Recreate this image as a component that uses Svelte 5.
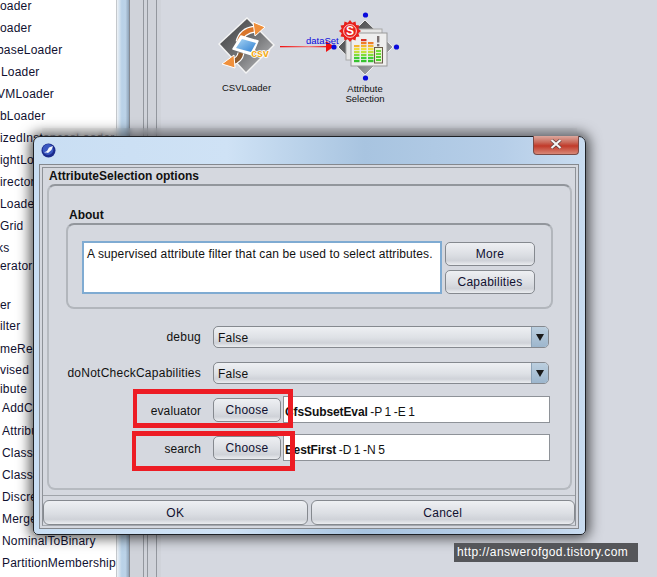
<script>
  const items = [
    { t: 'oader', x: 0, y: 6 }, { t: 'oader', x: 0, y: 28 }, { t: 'baseLoader', x: -3, y: 50 },
    { t: 'Loader', x: 1, y: 72 }, { t: 'VMLoader', x: -3, y: 94 }, { t: 'bLoader', x: 0, y: 116 },
    { t: 'izedInstancesLoader', x: 0, y: 138 }, { t: 'ightLoader', x: 0, y: 160 }, { t: 'irectoryLoader', x: 0, y: 182 },
    { t: 'Loader', x: 0, y: 204 }, { t: 'Grid', x: 0, y: 226 }, { t: 'ks', x: -3, y: 248 },
    { t: 'erator', x: 0, y: 266 }, { t: 'er', x: 0, y: 305 }, { t: 'ilter', x: 0, y: 326 },
    { t: 'meRemoval', x: 0, y: 349 }, { t: 'vised', x: 0, y: 370 }, { t: 'ibute', x: 0, y: 389 },
    { t: 'AddCluster', x: 2, y: 408 }, { t: 'AttributeSelection', x: 2, y: 431 }, { t: 'ClassAssigner', x: 2, y: 453 },
    { t: 'ClassOrder', x: 2, y: 475 }, { t: 'Discretize', x: 2, y: 497 }, { t: 'MergeTwoValues', x: 2, y: 519 },
    { t: 'NominalToBinary', x: 2, y: 541 }, { t: 'PartitionMembership', x: 2, y: 563 }
  ];
  const listRows = items.map((it, i) => ({
    ...it,
    h: i === 0 ? it.y + 10 : it.y - items[i - 1].y
  }));

  const burst = Array.from({ length: 24 }, (_, i) => {
    const r = i % 2 ? 8.6 : 11;
    const a = (i * Math.PI) / 12;
    return `${(350 + r * Math.cos(a)).toFixed(1)},${(31 + r * Math.sin(a)).toFixed(1)}`;
  }).join(' ');

  const barColors = ['#d8352a', '#ee7d28', '#f4b52e', '#eede3c', '#c2e03c', '#7fdc3a', '#3fcf35', '#36c22e'];
  const bars = [
    { x: 354, top: 2 },
    { x: 361, top: 0 },
    { x: 368, top: 1 }
  ];
</script>

<div class="desktop">
  <div class="list">
    {#each listRows as r}
      <div class="item" style="height:{r.h}px;padding-left:{Math.max(r.x, 0)}px;margin-left:{Math.min(r.x, 0)}px">{r.t}</div>
    {/each}
  </div>
  <div class="split"></div>
  <div class="stripes">
    <div class="stripe s1"></div>
    <div class="stripe s2"></div>
    <div class="stripe s3"></div>
  </div>

  <svg class="canvas" viewBox="161 0 496 577" width="496" height="577">
    <defs>
      <linearGradient id="dia" x1="0" y1="0" x2="1" y2="1">
        <stop offset="0" stop-color="#3c3c3e" />
        <stop offset="0.55" stop-color="#77787a" />
        <stop offset="1" stop-color="#c4c5c8" />
      </linearGradient>
      <linearGradient id="fold" x1="0" y1="0" x2="1" y2="1">
        <stop offset="0" stop-color="#a9d6f6" />
        <stop offset="1" stop-color="#2f7fd0" />
      </linearGradient>
      <linearGradient id="arrowfade" gradientUnits="userSpaceOnUse" x1="280" y1="0" x2="328" y2="0">
        <stop offset="0" stop-color="#f01010" />
        <stop offset="0.6" stop-color="#f08080" />
        <stop offset="1" stop-color="#f01010" />
      </linearGradient>
    </defs>

    <!-- CSVLoader -->
    <polygon points="247,17 275,45 246,74 218,44" fill="#f4f4f4" />
    <polygon points="247,19 273,45 246,72 220,44" fill="url(#dia)" />
    <path d="M239 42 C241 34 247 30 255 29" fill="none" stroke="#fff" stroke-width="7" />
    <path d="M239 42 C241 34 247 30 255 29" fill="none" stroke="#d9762c" stroke-width="4.6" />
    <polygon points="253,22 265,27 255,36" fill="#f0903c" stroke="#fff" stroke-width="1" />
    <path d="M241 53 C240 59 236 61 232 62" fill="none" stroke="#fff" stroke-width="7" />
    <path d="M241 53 C240 59 236 61 232 62" fill="none" stroke="#8a5a30" stroke-width="4.6" />
    <polygon points="234,55 222,64 235,68" fill="#f0903c" stroke="#fff" stroke-width="1" />
    <polygon points="241,36 258,41 252,55 233,49" fill="#fff" stroke="#fff" stroke-width="1.5" stroke-linejoin="round" />
    <polygon points="242,39 256,43 251,52 236,48" fill="url(#fold)" />
    <text class="csv" x="260" y="57">csv</text>

    <!-- Attribute Selection -->
    <polygon points="365,20 393,47 365,75 338,47" fill="url(#dia)" stroke="#f0f0f0" stroke-width="1" />
    <rect x="346" y="29" width="36" height="31" fill="#e6e6e6" stroke="#aaa" />
    <rect x="351" y="33" width="36" height="33" fill="#eeeeee" stroke="#999" />
    {#each bars as b}
      {#each barColors as c, i}
        {#if i >= b.top}
          <rect x={b.x} y={39 + i * 3} width="5.5" height="2.2" fill={c} />
        {/if}
      {/each}
    {/each}
    <rect x="374.5" y="47.5" width="8" height="15.5" fill="#e8f4d0" stroke="#6a5a4a" />
    <rect x="376" y="50" width="5" height="2" fill="#6fdc3a" />
    <rect x="376" y="53" width="5" height="2" fill="#6fdc3a" />
    <rect x="376" y="56" width="5" height="2" fill="#4fd030" />
    <rect x="376" y="59" width="5" height="2" fill="#4fd030" />
    <rect x="377" y="36" width="2.4" height="6.5" fill="#7a7070" />
    <rect x="377" y="44" width="2.4" height="2.4" fill="#7a7070" />
    <polygon points={burst} fill="#e8201c" />
    <circle cx="350" cy="31" r="6.4" fill="#e8201c" stroke="#fff" stroke-width="0.8" />
    <text class="sbadge" x="350" y="35.2">S</text>

    <!-- connection -->
    <rect x="280" y="46" width="48" height="1.3" fill="url(#arrowfade)" />
    <polygon points="326,41 326,52 334,46.5" fill="#f01010" />
    <text class="conn" x="306" y="43.5">dataSet</text>
    <circle cx="334" cy="47" r="2.6" fill="#0a0adc" />
    <circle cx="365.5" cy="15" r="2.6" fill="#0a0adc" />
    <circle cx="396.5" cy="47" r="2.6" fill="#0a0adc" />
    <circle cx="365.5" cy="78" r="2.6" fill="#0a0adc" />

    <text class="node" x="246.5" y="91">CSVLoader</text>
    <text class="node" x="365" y="92">Attribute</text>
    <text class="node" x="365" y="102">Selection</text>
  </svg>

  <section class="dialog">
    <header class="titlebar">
      <svg class="appicon" viewBox="0 0 15 15" width="15" height="15">
        <circle cx="7.5" cy="7.5" r="7" fill="#1b2a8c" />
        <circle cx="7" cy="6.5" r="5.4" fill="#3a58c0" />
        <path d="M3 9.5 L6 8 L8 4.5 L12 3 L10.5 7 L7 10 L5.5 9.6 Z" fill="#f4f6fb" />
      </svg>
      <div class="close">
        <svg viewBox="0 0 12 10" width="12" height="10">
          <path d="M1.5 1 L10.5 9 M10.5 1 L1.5 9" stroke="#5a3a38" stroke-width="3.4" />
          <path d="M1.5 1 L10.5 9 M10.5 1 L1.5 9" stroke="#f6f6f6" stroke-width="2.2" />
        </svg>
      </div>
    </header>
    <div class="client">
      <div class="inner">
        <div class="heading">AttributeSelection options</div>
        <div class="group">
          <div class="about-label">About</div>
          <div class="about">
            <div class="textarea">A supervised attribute filter that can be used to select attributes.</div>
            <div class="about-btns">
              <button class="btn">More</button>
              <button class="btn">Capabilities</button>
            </div>
          </div>
          <div class="form">
            <div class="row r1">
              <span class="lab">debug</span>
              <div class="combo"><span>False</span><i class="drop"><b></b></i></div>
            </div>
            <div class="row r2">
              <span class="lab">doNotCheckCapabilities</span>
              <div class="combo"><span>False</span><i class="drop"><b></b></i></div>
            </div>
            <div class="row r3">
              <span class="lab">evaluator</span>
              <button class="btn choose">Choose</button>
              <div class="field"><strong>CfsSubsetEval</strong> -P 1 -E 1</div>
            </div>
            <div class="row r4">
              <span class="lab">search</span>
              <button class="btn choose">Choose</button>
              <div class="field"><strong>BestFirst</strong> -D 1 -N 5</div>
            </div>
          </div>
        </div>
        <div class="footer">
          <button class="btn ok">OK</button>
          <button class="btn cancel">Cancel</button>
        </div>
      </div>
    </div>
  </section>

  <div class="mark m1"></div>
  <div class="mark m2"></div>
  <div class="watermark">http://answerofgod.tistory.com</div>
</div>

<style>
  :global(body) { margin: 0; background: #d5d8e0; }
  .desktop {
    position: relative;
    width: 657px;
    height: 577px;
    overflow: hidden;
    display: flex;
    background: #d5d8e0;
    font-family: "Liberation Sans", Arial, sans-serif;
    font-size: 12px;
    color: #111;
  }
  .list {
    width: 116px;
    flex: none;
    background: #fff;
    overflow: hidden;
    border-right: 1px solid #c4c8cc;
    margin-top: -3px;
  }
  .item {
    display: flex;
    align-items: flex-end;
    white-space: nowrap;
    line-height: 14px;
    letter-spacing: 0.2px;
    color: #101030;
  }
  .split {
    width: 12px;
    flex: none;
    background: linear-gradient(90deg, #eef2f6, #b9d2e8 40%, #bcd3e8 70%, #8ea3b8);
    border-right: 1px solid #858a92;
  }
  .stripes {
    width: 31px;
    flex: none;
    display: flex;
    background: #d0d3da;
  }
  .stripe { border-right: 1px solid #93979e; }
  .s1 { width: 13px; }
  .s2 { width: 3px; }
  .s3 { width: 8px; }
  .canvas { flex: none; display: block; }
  .csv { font: bold 10.5px "Liberation Sans", sans-serif; fill: #f4ac18; text-anchor: middle; stroke: #fff; stroke-width: 1.6px; paint-order: stroke; }
  .sbadge { font: bold 12px "Liberation Sans", sans-serif; fill: #fff; text-anchor: middle; }
  .conn { font: 9.5px "Liberation Sans", sans-serif; fill: #0a0adc; }
  .node { font: 9.5px "Liberation Sans", sans-serif; fill: #111; text-anchor: middle; }

  .dialog {
    position: absolute;
    left: 33px;
    top: 136px;
    width: 553px;
    height: 399px;
    box-sizing: border-box;
    border: 1px solid #1e2126;
    border-radius: 7px 7px 5px 5px;
    background: linear-gradient(90deg, #c9def3 0%, #cfe2f5 35%, #a8c4e0 60%, #b6cee8 85%, #c9dcf0 100%);
    box-shadow: 0 0 13px 3px rgba(0, 0, 0, .68);
    display: flex;
    flex-direction: column;
  }
  .dialog::before {
    content: "";
    position: absolute;
    left: 8px;
    right: 8px;
    top: -9px;
    height: 8px;
    backdrop-filter: blur(2px);
  }
  .titlebar {
    height: 27px;
    flex: none;
    position: relative;
    display: flex;
    align-items: center;
    justify-content: space-between;
    padding-left: 7px;
  }
  .appicon { display: block; }
  .close {
    position: absolute;
    right: 6px;
    top: -1px;
    width: 46px;
    height: 19px;
    box-sizing: border-box;
    border: 1px solid #7a4a46;
    border-top: none;
    border-radius: 0 0 4px 4px;
    background: linear-gradient(180deg, #dca89e 0%, #c9695a 35%, #c13a2a 55%, #d88878 100%);
    display: flex;
    align-items: center;
    justify-content: center;
  }
  .close svg { display: block; margin-top: -3px; }
  .client {
    flex: 1;
    min-height: 0;
    margin: 0 6px 5px 5px;
    border: 1px solid #84888e;
    background: #d5d8df;
    padding: 2px;
    display: flex;
    flex-direction: column;
  }
  .inner {
    flex: 1;
    border: 1px solid #8e9298;
    border-bottom: 1px solid #a4a8ae;
    display: flex;
    flex-direction: column;
  }
  .heading {
    font-weight: bold;
    height: 16px;
    line-height: 16px;
    padding-left: 6px;
    flex: none;
  }
  .group {
    margin: 0 3px 0 4px;
    height: 306px;
    box-sizing: border-box;
    flex: none;
    border: 2px solid #b6bac0;
    border-top-color: #92969c;
    border-radius: 8px;
    padding: 21px 17px 0 17px;
    background: #d5d8df;
  }
  .about-label {
    font-weight: bold;
    height: 16px;
    line-height: 16px;
    padding-left: 3px;
  }
  .about {
    height: 86px;
    box-sizing: border-box;
    border: 2px solid #b2b6bc;
    border-top-color: #92969c;
    border-radius: 8px;
    padding: 16px 0 0 14px;
    display: flex;
    gap: 3px;
  }
  .textarea {
    width: 360px;
    height: 53px;
    box-sizing: border-box;
    border: 2px solid #7fabd2;
    background: #fff;
    padding: 4px 3px;
    line-height: 15px;
    letter-spacing: .12px;
    white-space: nowrap;
  }
  .about-btns {
    display: flex;
    flex-direction: column;
    gap: 4px;
    margin-top: 1px;
  }
  .about-btns .btn { width: 90px; height: 24px; }
  .btn {
    box-sizing: border-box;
    border: 1px solid #85898f;
    border-radius: 5px;
    padding: 0;
    font: 12px "Liberation Sans", Arial, sans-serif;
    letter-spacing: .25px;
    color: #101030;
    background: linear-gradient(180deg, #eef0f3 0%, #dbdee3 55%, #cfd2d8 80%, #ebedf0 100%);
  }
  .form {
    margin-top: 17px;
    display: flex;
    flex-direction: column;
  }
  .row { display: flex; align-items: center; }
  .r1 { height: 22px; }
  .r2 { height: 22px; margin-top: 14px; }
  .r3 { height: 27px; margin-top: 12px; }
  .r4 { height: 27px; margin-top: 11px; }
  .lab {
    width: 135px;
    margin-right: 12px;
    text-align: right;
    white-space: nowrap;
    letter-spacing: .25px;
    flex: none;
    display: block;
  }
  .r3 .lab, .r4 .lab { margin-top: 2px; letter-spacing: .1px; }
  .combo {
    width: 336px;
    height: 22px;
    box-sizing: border-box;
    border: 1px solid #85898f;
    border-radius: 5px;
    background: linear-gradient(180deg, #eef0f3 0%, #dde0e5 55%, #cfd2d8 80%, #ebedf0 100%);
    display: flex;
    justify-content: space-between;
    align-items: center;
    padding-left: 4px;
    overflow: hidden;
    letter-spacing: .2px;
  }
  .combo span { margin-top: 1px; }
  .drop {
    width: 16px;
    height: 100%;
    background: linear-gradient(180deg, #bccfdf, #9db6cd);
    border-left: 1px solid #8ca3b8;
    display: flex;
    align-items: center;
    justify-content: center;
  }
  .drop b {
    width: 0;
    height: 0;
    border-left: 4px solid transparent;
    border-right: 4px solid transparent;
    border-top: 7px solid #1a1a1a;
  }
  .choose { width: 68px; height: 24px; margin: 1px 2px 0 0; flex: none; }
  .field {
    width: 267px;
    height: 27px;
    box-sizing: border-box;
    border: 1px solid #8e9298;
    background: #fff;
    line-height: 30px;
    padding-left: 1px;
    white-space: nowrap;
    word-spacing: -.8px;
  }
  .field strong { letter-spacing: -.1px; }
  .footer {
    margin-top: 5px;
    border-top: 1px solid #a0a4aa;
    padding-top: 4px;
    display: flex;
    gap: 3px;
  }
  .footer .btn { height: 25px; flex: 1; border-radius: 6px; }

  .mark {
    position: absolute;
    box-sizing: border-box;
    border: 5px solid #ed1c24;
    border-left-width: 4px;
  }
  .m1 { left: 133px; top: 389px; width: 160px; height: 39px; }
  .m2 { left: 132px; top: 431px; width: 163px; height: 40px; }
  .watermark {
    position: absolute;
    left: 454px;
    top: 543px;
    width: 184px;
    height: 19px;
    box-sizing: border-box;
    padding-left: 3px;
    background: #55565a;
    color: #fff;
    font: 12px/19px "Liberation Sans", sans-serif;
    letter-spacing: .4px;
    white-space: nowrap;
  }
</style>
